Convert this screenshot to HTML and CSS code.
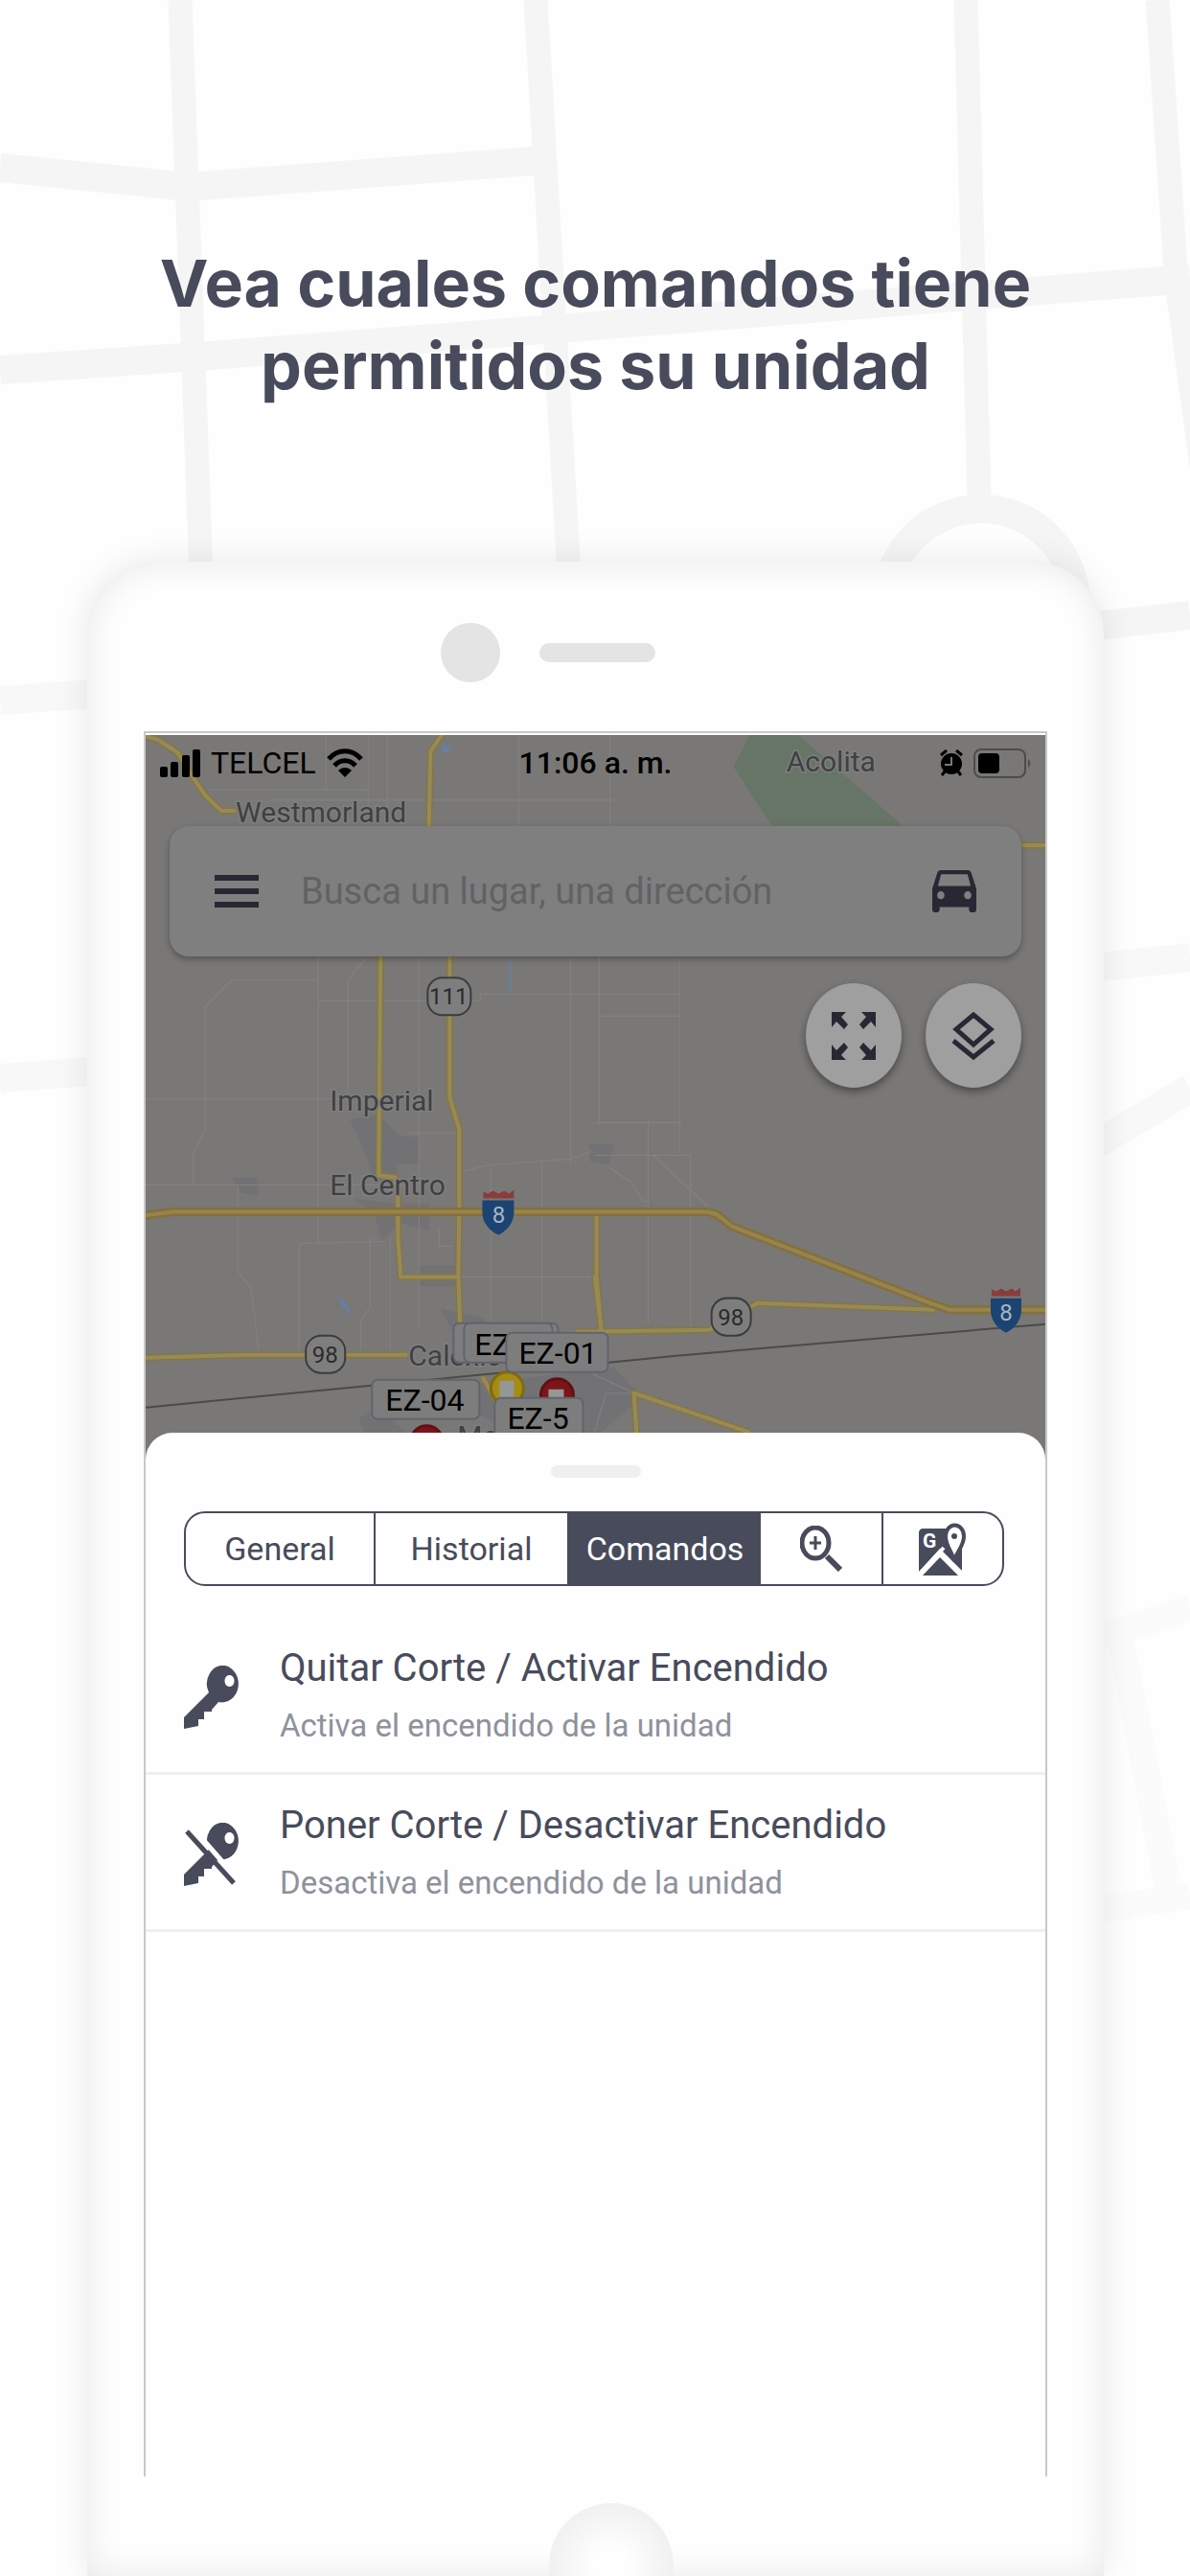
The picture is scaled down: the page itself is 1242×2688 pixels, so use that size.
FILE: index.html
```
<!DOCTYPE html>
<html lang="es">

<head>
    <meta charset="utf-8">
    <title>Comandos de la unidad</title>
    <link rel="stylesheet" href="styles.css">
</head>

<body>
    <!-- Street pattern behind the phone -->
    <svg class="streets" viewBox="0 0 1242 2688" preserveAspectRatio="xMidYMin slice" aria-hidden="true">
        <g fill="none" stroke="#fbfbfb" stroke-width="28">
            <path d="M1150 1708 1242 1678"/>
            <path d="M1170 1712 1222 1985"/>
            <path d="M1150 1992 1242 1978"/>
        </g>
        <g fill="none" stroke="#f5f5f5" stroke-width="25">
            <path d="M188 0 210 600"/>
            <path d="M559 0 594 600"/>
            <path d="M1008 0 1022 520"/>
            <path d="M1208 0 1228 295 1256 500"/>
        </g>
        <g fill="none" stroke="#f5f5f5" stroke-width="30">
            <path d="M0 175 196 195 570 167"/>
            <path d="M0 386 206 372 581 343 1010 309 1242 291"/>
            <circle cx="1024" cy="630" r="99"/>
            <path d="M1120 656 1242 642"/>
        </g>
        <g fill="none" stroke="#f8f8f8" stroke-width="30">
            <path d="M0 731 110 723"/>
            <path d="M0 1125 110 1117"/>
            <path d="M1130 1011 1242 999"/>
            <path d="M1130 1202 1242 1136"/>
        </g>
    </svg>

    <main class="page">
        <h1 class="headline">Vea cuales comandos tiene<br>permitidos su unidad</h1>

        <div class="phone">
            <div class="phone-top">
                <span class="camera"></span>
                <span class="speaker"></span>
            </div>

            <div class="screen">
                <div class="map-view">
                    <svg class="map" viewBox="152 767 938 768" preserveAspectRatio="xMidYMin slice">
                        <path d="M782 767h50l110 95H805l-40-62z" fill="#667566"/>
                        <!-- Towns -->
                        <g fill="#727275">
                            <path d="M365 1168l30-6 20 22 22 2v28h-24l3 20-26-2-10-32zM241 1228h28v20l-18-4zM368 1250l50 6h30v28l-30-8-20 18-8-30zM437 1320h39v22h-39zM460 1365l44 10 16 26-40 4zM374 1480l20-12 30 26h-44zM440 1450l200-24 30 30-45 39h-80zM615 1193h26l-6 22-20-4z"/>
                        </g>
                        <!-- Minor roads -->
                        <g fill="none" stroke="#838384" stroke-width="1">
                            <path d="M340 767v58M384 767v78M404 767v78M541 767v95M636 767v95M217 824h168M280 835h361M332 998v300M437 998v390M363 1140v-118l20-24M214 1145v-95l28-28h90M332 1044h169v-7h208M595 998v216M625 998v175M709 998v205M625 1060h84M152 1146h240M214 1145v35l-12 22v34M152 1236h270M248 1236v90l14 18 8 66M312 1297v116M312 1297l90-2M386 1290v74l-10 14v35M407 1290v123M480 1222l32-7 83-6 22-8M425 1182h60M512 1216v190M565 1214v180M480 1332h140M458 1280v20h14M620 1171h90M620 1205h100v185M635 1217l24 17 12 19h6M676 1170v210M681 1205l62 58M632 1453h30l-44-20M632 1453l-12 40"/>
                        </g>
                        <!-- Water -->
                        <g fill="#6580a0">
                            <path d="M461 775l7 5 3 3-10 3zM350 1350l12 10 5 13-9-9z"/>
                            <path d="M531 1003h2v34h-2z"/>
                        </g>
                        <!-- Highways -->
                        <g fill="none" stroke-linejoin="round">
                            <g class="road-edge">
                                <path id="hw" d="M148 767 165 772 185 785 193 797 202 812 215 831 231 846H246M462 765 449 784 447 880M397 990 395 1226 412 1228 415 1250V1290L418 1332H478M469 990V1145L479 1178V1260L478 1330 480 1385M622 1268V1330L627 1387 620 1330M152 1416 260 1413H425M600 1389 740 1387 762 1373 783 1363 790 1359 975 1366M664 1497 661 1453 782 1494M1060 882H1092M503 1436 520 1465"/>
                            </g>
                            <use href="#hw" class="road"/>
                            <path class="main-edge" d="M150 1268 180 1264H738L748 1267 763 1279 967 1358 990 1366H1092"/>
                            <path class="main-road" d="M150 1268 180 1264H738L748 1267 763 1279 967 1358 990 1366H1092"/>
                            <path d="M152 1468 387 1445 520 1432 635 1421 705 1414 1090 1381" stroke="#4a4a48" stroke-width="2"/>
                        </g>
                        <!-- Road shields -->
                        <g class="shield">
                            <rect x="446" y="1020" width="45" height="39" rx="15"/>
                            <rect x="319" y="1393" width="41" height="39" rx="16"/>
                            <rect x="742" y="1354" width="41" height="39" rx="16"/>
                            <text x="468" y="1048">111</text>
                            <text x="339" y="1421">98</text>
                            <text x="762" y="1382">98</text>
                        </g>
                        <g class="interstate">
                            <path d="M504 1250v-7l5 2 5-3 6 3 6-3 5 3 5-4v9z" fill="#8a3c3c"/>
                            <path d="M503 1252h33v12c0 12-8 20-16 24-9-4-17-12-17-24z" fill="#1b4473"/>
                            <text x="520" y="1275">8</text>
                            <path d="M1034 1352v-7l5 2 5-3 5 3 6-3 4 3 5-4v9z" fill="#8a3c3c"/>
                            <path d="M1033 1354h32v12c0 12-8 20-16 24-8-4-16-12-16-24z" fill="#1b4473"/>
                            <text x="1049" y="1377">8</text>
                        </g>
                        <!-- Places -->
                        <g class="place">
                            <text x="246" y="858">Westmorland</text>
                            <text x="820" y="805">Acolita</text>
                            <text x="344" y="1159">Imperial</text>
                            <text x="344" y="1246">El Centro</text>
                            <text x="426" y="1424">Calexico</text>
                            <text x="477" y="1508">Me</text>
                        </g>
                        <!-- Units -->
                        <g stroke-width="3">
                            <circle cx="529" cy="1448" r="17" fill="#a58b14" stroke="#7e6a12"/>
                            <circle cx="581" cy="1455" r="17" fill="#7c1519" stroke="#611014"/>
                            <circle cx="445" cy="1504" r="17" fill="#7c1519" stroke="#611014"/>
                            <path d="M521 1440h15v20h-15zM572 1449h16v14h-16z" fill="#969696"/>
                        </g>
                        <g class="tag">
                            <rect x="473" y="1380" width="109" height="41" rx="6"/>
                            <rect x="484" y="1380" width="92" height="41" rx="6"/>
                            <text x="495" y="1413">EZ</text>
                            <rect x="528" y="1390" width="106" height="41" rx="6"/>
                            <text x="541" y="1422">EZ-01</text>
                            <rect x="388" y="1439" width="112" height="41" rx="6"/>
                            <text x="402" y="1471">EZ-04</text>
                            <rect x="516" y="1458" width="92" height="42" rx="6"/>
                            <text x="529" y="1490">EZ-5</text>
                        </g>
                    </svg>

                    <div class="status-bar">
                        <div class="status-left">
                            <svg width="42" height="29" viewBox="0 0 42 29">
                                <rect y="18" width="8" height="11" rx="2"/>
                                <rect x="11" y="13" width="8" height="16" rx="2"/>
                                <rect x="23" y="6" width="8" height="23" rx="2"/>
                                <rect x="34" width="8" height="29" rx="2"/>
                            </svg>
                            <span>TELCEL</span>
                            <svg width="38" height="30" viewBox="0 0 38 30">
                                <g fill="none" stroke="#000" stroke-width="5">
                                    <path d="M2 11C12 0 26 0 36 11"/>
                                    <path d="M8 18C14 11 24 11 30 18"/>
                                </g>
                                <path d="M19 30l-7-7c4-4 10-4 14 0z"/>
                            </svg>
                        </div>
                        <strong class="time">11:06 a. m.</strong>
                        <div class="status-right">
                            <svg width="24" height="28" viewBox="0 0 24 28">
                                <circle cx="12" cy="15" r="11"/>
                                <path d="M1 6l6-5M23 6l-6-5M5 23l-3 4M19 23l3 4" stroke="#000" stroke-width="3"/>
                                <path d="M12 8v8H5" fill="none" stroke="#797876" stroke-width="2"/>
                            </svg>
                            <svg width="60" height="31" viewBox="0 0 60 31">
                                <rect x="1" y="1" width="53" height="29" rx="7" fill="none" stroke="#4c4c4b" stroke-width="2"/>
                                <rect x="5" y="5" width="22" height="21" rx="4"/>
                                <path d="M57 11c3 2 3 7 0 9z" fill="#4c4c4b"/>
                            </svg>
                        </div>
                    </div>

                    <div class="search">
                        <button class="icon-btn" aria-label="Menú">
                            <svg width="46" height="34" viewBox="0 0 46 34"><path d="M0 0h46v6H0zM0 14h46v6H0zM0 28h46v6H0z"/></svg>
                        </button>
                        <input type="text" placeholder="Busca un lugar, una dirección" aria-label="Buscar">
                        <button class="icon-btn" aria-label="Vehículos">
                            <svg width="46" height="44" viewBox="3 5 18 16" preserveAspectRatio="none"><path d="M18.920 6.010C18.720 5.420 18.160 5 17.500 5h-11c-.660 0-1.210.420-1.420 1.010L3 12v8c0 .550.450 1 1 1h1c.550 0 1-.450 1-1v-1h12v1c0 .550.450 1 1 1h1c.550 0 1-.450 1-1v-8l-2.080-5.990zM6.500 16c-.830 0-1.500-.670-1.500-1.500S5.670 13 6.500 13s1.500.670 1.500 1.500S7.330 16 6.500 16zm11 0c-.830 0-1.500-.670-1.500-1.500s.670-1.500 1.500-1.500 1.500.670 1.500 1.500-.670 1.500-1.500 1.500zM5.300 11l1.300-4.500h10.800L18.700 11z"/></svg>
                        </button>
                    </div>

                    <div class="map-actions">
                        <button class="round-btn" aria-label="Pantalla completa">
                            <svg width="46" height="50" viewBox="0 0 46 50"><path d="M0 0h15l-5 5 7 8-4 5-8-8-5 6zM46 0H31l5 5-7 8 4 5 8-8 5 6zM0 50h15l-5-5 7-8-4-5-8 8-5-6zM46 50H31l5-5-7-8 4-5 8 8 5-6z"/></svg>
                        </button>
                        <button class="round-btn" aria-label="Capas">
                            <svg width="46" height="52" viewBox="0 0 46 52"><g fill="none" stroke="#282835" stroke-width="5"><path d="M23 4 41 19 23 35 5 19z"/><path d="M2 31 23 48 44 31"/></g></svg>
                        </button>
                    </div>
                </div>

                <section class="sheet">
                    <div class="handle"></div>

                    <nav class="tabs">
                        <button class="tab">General</button>
                        <button class="tab">Historial</button>
                        <button class="tab active">Comandos</button>
                        <button class="tab" aria-label="Acercar">
                            <svg width="44" height="48" viewBox="0 0 44 48">
                                <g fill="none" stroke="#484b5b">
                                    <ellipse cx="16" cy="18" rx="14" ry="16" stroke-width="5"/>
                                    <path d="M16 11v14M10 18h12" stroke-width="3"/>
                                    <path d="M28 32 42 46" stroke-width="6"/>
                                </g>
                            </svg>
                        </button>
                        <button class="tab" aria-label="Google Maps">
                            <svg width="50" height="55" viewBox="0 0 50 55">
                                <path d="M4 6h26c-2 12 3 20 7 30l8-10v24L22 27 0 51V10c0-2 2-4 4-4z" fill="#484b5b"/>
                                <path d="M22 36 41 55H4z" fill="#484b5b"/>
                                <path d="M2 52 26 26" stroke="#fff" stroke-width="4"/>
                                <path d="M37 40c-2-10-9-15-9-26a9 11 0 0 1 19 0c0 11-8 16-10 26z" fill="#fff" stroke="#484b5b" stroke-width="4"/>
                                <circle cx="37" cy="14" r="3" fill="#484b5b"/>
                                <text class="g-letter" x="4" y="26">G</text>
                            </svg>
                        </button>
                    </nav>

                    <ul class="commands">
                        <li class="command">
                            <svg class="command-icon" viewBox="0 0 60 66">
                                <path fill-rule="evenodd" d="M43 0a17 19 0 1 1-7 38l-7 8v2h-8v8h-6v7L0 66V54L26 28A17 19 0 0 1 43 0zm4 10a5 6 0 1 0 1 0z"/>
                            </svg>
                            <div>
                                <h2>Quitar Corte / Activar Encendido</h2>
                                <p>Activa el encendido de la unidad</p>
                            </div>
                        </li>
                        <li class="command">
                            <svg class="command-icon" viewBox="0 0 60 66">
                                <path fill-rule="evenodd" d="M43 0a17 19 0 1 1-7 38l-7 8v2h-8v8h-6v7L0 66V54L26 28A17 19 0 0 1 43 0zm4 10a5 6 0 1 0 1 0z"/>
                                <path d="M8 4 57 60" stroke="#fff" stroke-width="5"/>
                                <path d="M3 9 52 63" stroke="#484b5b" stroke-width="5"/>
                            </svg>
                            <div>
                                <h2>Poner Corte / Desactivar Encendido</h2>
                                <p>Desactiva el encendido de la unidad</p>
                            </div>
                        </li>
                    </ul>
                </section>
            </div>

            <div class="phone-bottom">
                <span class="home-button"></span>
            </div>
        </div>
    </main>
</body>

</html>
```
FILE: styles.css
```
* {
    box-sizing: border-box;
}

body {
    margin: 0;
    background-color: #fefefe;
    color: #484b5b;
    font-family: Roboto, "Liberation Sans", sans-serif;
    position: relative;
}

button {
    border: none;
    padding: 0;
    background: none;
    font: inherit;
    color: inherit;
    cursor: pointer;
}

svg {
    display: block;
}

.streets {
    position: absolute;
    left: 0;
    top: 0;
    width: 100%;
    height: 100%;
    z-index: -1;
}

.page {
    min-height: 100vh;
    display: flex;
    flex-direction: column;
    padding: 252px 90px 0 91px;
}

.headline {
    margin: 0 0 162px;
    font-family: Inter, sans-serif;
    font-size: 68px;
    font-weight: 700;
    line-height: 86px;
    text-align: center;
}

/* Phone frame */
.phone {
    flex: 1;
    display: flex;
    flex-direction: column;
    padding: 64px 59px 0;
    background: #fefefe;
    border-radius: 76px 76px 0 0;
    box-shadow: 0 0 36px rgba(0, 0, 0, 0.09), inset 0 0 36px rgba(0, 0, 0, 0.09);
}

.phone-top {
    display: flex;
    align-items: center;
    gap: 41px;
    padding: 0 0 51px 310px;
}

.camera {
    width: 62px;
    height: 62px;
    border-radius: 50%;
    background: #e4e4e4;
}

.speaker {
    width: 121px;
    height: 20px;
    border-radius: 10px;
    background: #e4e4e4;
}

.screen {
    flex: 1;
    display: flex;
    flex-direction: column;
    padding-top: 2px;
    border: 2px solid #c8c8c9;
    border-bottom: none;
}

.phone-bottom {
    height: 104px;
    padding: 28px 0 0 32px;
    overflow: hidden;
}

.home-button {
    display: block;
    width: 130px;
    height: 130px;
    margin: 0 auto;
    border-radius: 50%;
    background: radial-gradient(#fefefe 20%, #f0f0f0 72%);
}

/* Map */
.map-view {
    position: relative;
    padding: 10px 25px 0;
    height: 768px;
    background: #797876;
}

.map {
    position: absolute;
    left: 0;
    top: 0;
    width: 100%;
    height: 100%;
}

.road-edge {
    stroke: #857643;
    stroke-width: 7;
}

.road {
    stroke: #988a55;
    stroke-width: 4;
}

.main-edge {
    stroke: #85703a;
    stroke-width: 9;
}

.main-road {
    stroke: #97834e;
    stroke-width: 4;
}

.shield rect {
    fill: #7e7e7e;
    stroke: #3c3c3c;
    stroke-width: 2;
}

.shield text,
.interstate text {
    font-size: 24px;
    text-anchor: middle;
    fill: #2b2b2b;
}

.interstate text {
    fill: #a9b4c0;
}

.place {
    font-size: 30px;
    fill: #3f4042;
    stroke: #7f7f7f;
    stroke-width: 3;
    paint-order: stroke;
}

.tag rect {
    fill: #7d7d7e;
    stroke: #61646d;
    stroke-width: 2;
}

.tag text {
    font-size: 32px;
    fill: #000;
}

.status-bar {
    position: relative;
    display: grid;
    grid-template-columns: 1fr auto 1fr;
    align-items: center;
    height: 32px;
    margin: 0 -10px;
    font-size: 32px;
    color: #000;
}

.status-left,
.status-right {
    display: flex;
    align-items: center;
    gap: 11px;
}

.status-right {
    justify-content: flex-end;
}

.time {
    font-weight: 500;
}

.search {
    position: relative;
    display: flex;
    align-items: center;
    height: 136px;
    margin-top: 53px;
    padding: 0 47px;
    border-radius: 20px;
    background: #7f7f7f;
    box-shadow: 0 3px 6px rgba(0, 0, 0, 0.3);
    fill: #282835;
}

.search input {
    flex: 1;
    min-width: 0;
    margin: 0 46px 0 44px;
    padding: 0;
    border: none;
    outline: none;
    background: none;
    font: inherit;
    font-size: 38px;
    color: #282835;
}

.search input::placeholder {
    color: #626264;
    opacity: 1;
}

.map-actions {
    position: relative;
    display: flex;
    justify-content: flex-end;
    gap: 25px;
    margin-top: 28px;
    fill: #282835;
}

.round-btn {
    display: grid;
    place-items: center;
    width: 100px;
    height: 109px;
    border-radius: 50%;
    background: #9f9f9f;
    box-shadow: 0 4px 9px rgba(0, 0, 0, 0.4);
}

/* Bottom sheet */
.sheet {
    position: relative;
    flex: 1;
    margin-top: -40px;
    padding-top: 34px;
    border-radius: 28px 28px 0 0;
    background: #fefefe;
}

.handle {
    width: 94px;
    height: 13px;
    margin: 0 auto 35px;
    border-radius: 7px;
    background: #efefef;
}

.tabs {
    display: grid;
    grid-template-columns: 196fr 202fr 202fr 126fr 126fr;
    height: 78px;
    margin: 0 43px 0 40px;
    border: 2px solid #484b5b;
    border-radius: 22px;
    overflow: hidden;
}

.tab {
    display: grid;
    place-items: center;
    font-size: 34px;
}

.tab + .tab {
    border-left: 2px solid #484b5b;
}

.tab.active {
    background: #484b5b;
    color: #fff;
}

.tab.active + .tab {
    border-left: none;
}

.g-letter {
    font-size: 21px;
    font-weight: 700;
    fill: #fff;
}

.commands {
    list-style: none;
    margin: 33px 0 0;
    padding: 0;
}

.command {
    display: flex;
    align-items: center;
    gap: 40px;
    height: 164px;
    padding: 4px 0 0 40px;
    border-bottom: 3px solid #efeff0;
}

.command-icon {
    width: 60px;
    height: 66px;
    fill: #484b5b;
}

.command h2,
.command p {
    margin: 0;
    font-weight: 400;
}

.command h2 {
    font-size: 40px;
    line-height: 60px;
}

.command p {
    font-size: 33px;
    line-height: 60px;
    color: #8e929c;
}
```
